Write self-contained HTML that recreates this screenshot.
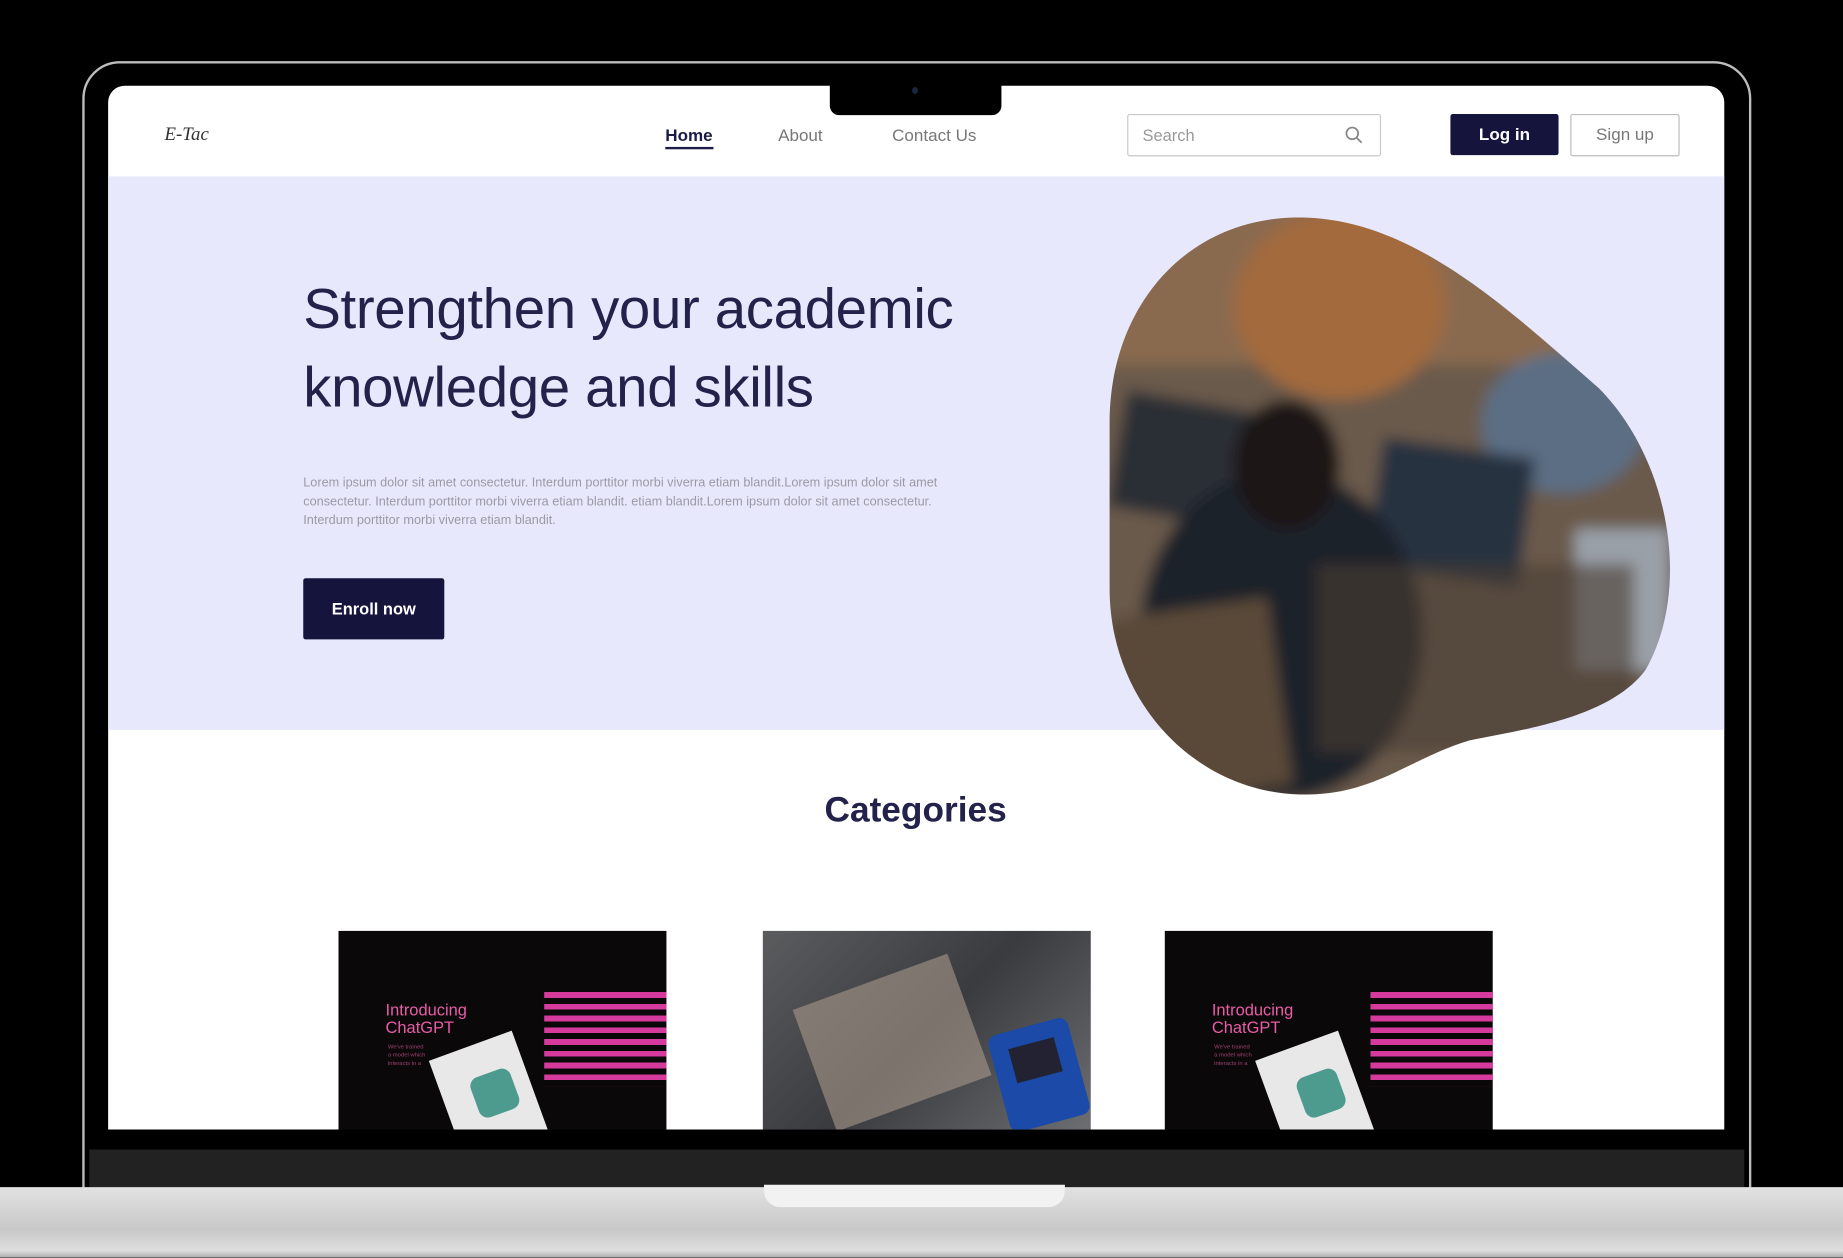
<!DOCTYPE html>
<html><head><meta charset="utf-8"><style>
html,body{margin:0;padding:0;background:#000;overflow:hidden;width:1843px;height:1258px}
#w{position:absolute;left:0;top:0;width:1568px;height:1070px;transform:scale(1.17538);transform-origin:0 0;font-family:"Liberation Sans",sans-serif}
.a{position:absolute}
.nav{font-size:14.5px;color:#777;top:108px}
</style></head><body><div id="w">
<div class="a" style="left:70px;top:52px;width:1416px;height:1000px;border:2px solid #bdbdbd;border-radius:32px 32px 0 0;background:#000"></div>
<div class="a" style="left:92px;top:73px;width:1375px;height:888px;background:#fff;border-radius:14px 14px 0 0;overflow:hidden">
 <div class="a" style="left:0;top:77px;width:1375px;height:471px;background:#e8e8fc"></div>
</div>
<div class="a" style="left:706px;top:70px;width:146px;height:28px;background:#000;border-radius:0 0 8px 8px"></div>
<div class="a" style="left:776px;top:74px;width:5px;height:6px;border-radius:50%;background:#1b2640"></div>
<div class="a" style="left:140px;top:106px;font-family:'Liberation Serif',serif;font-style:italic;font-size:16px;color:#333">E-Tac</div>
<div class="a nav" style="left:566px;color:#1c1b45;font-weight:bold">Home</div>
<div class="a" style="left:566px;top:125px;width:41px;height:2px;background:#1c1b45"></div>
<div class="a nav" style="left:662px">About</div>
<div class="a nav" style="left:759px">Contact Us</div>
<div class="a" style="left:959px;top:97px;width:214px;height:34px;border:1px solid #c9c9c9;border-radius:2px;background:#fff"></div>
<div class="a" style="left:972px;top:107px;font-size:14px;color:#999">Search</div>
<svg class="a" style="left:1144px;top:107px" width="16" height="16" viewBox="0 0 16 16"><circle cx="6.5" cy="6.5" r="5" fill="none" stroke="#888" stroke-width="1.5"/><path d="M10 10l4.5 4.5" stroke="#888" stroke-width="1.5"/></svg>
<div class="a" style="left:1234px;top:97px;width:92px;height:35px;background:#15143d;border-radius:2px;color:#fff;font-size:14.5px;font-weight:bold;text-align:center;line-height:36px">Log in</div>
<div class="a" style="left:1336px;top:97px;width:91px;height:34px;border:1px solid #bbb;border-radius:2px;color:#777;font-size:14.5px;text-align:center;line-height:35px">Sign up</div>
<div class="a" style="left:258px;top:230px;font-size:48px;line-height:67px;color:#23224b;letter-spacing:-0.3px">Strengthen your academic<br>knowledge and skills</div>
<div class="a" style="left:258px;top:403px;width:560px;font-size:10.8px;line-height:16px;color:#9a9aa6">Lorem ipsum dolor sit amet consectetur. Interdum porttitor morbi viverra etiam blandit.Lorem ipsum dolor sit amet consectetur. Interdum porttitor morbi viverra etiam blandit. etiam blandit.Lorem ipsum dolor sit amet consectetur. Interdum porttitor morbi viverra etiam blandit.</div>
<div class="a" style="left:258px;top:492px;width:120px;height:52px;background:#15143d;border-radius:2px;color:#fff;font-size:14px;font-weight:bold;text-align:center;line-height:52px">Enroll now</div>
<svg class="a" style="left:0;top:0" width="1568" height="1070">
<defs><clipPath id="b"><path d="M1105,185 C1200,185 1280,260 1360,330 C1420,390 1440,500 1400,570 C1370,610 1300,620 1250,630 C1200,645 1170,676 1110,676 C1020,676 944,600 944,500 L944,360 C944,260 1010,185 1105,185 Z"/></clipPath>
<filter id="bl"><feGaussianBlur stdDeviation="6"/></filter></defs>
<g clip-path="url(#b)"><g filter="url(#bl)">
<rect x="900" y="150" width="560" height="560" fill="#6b5a4c"/>
<rect x="900" y="150" width="560" height="160" fill="#8a6a50"/>
<ellipse cx="1140" cy="260" rx="90" ry="80" fill="#a36a3c"/>
<ellipse cx="1330" cy="360" rx="70" ry="60" fill="#5c6e84"/>
<rect x="1170" y="380" width="130" height="110" fill="#273040" transform="rotate(8 1230 430)"/>
<rect x="950" y="340" width="110" height="100" fill="#2c2f36" transform="rotate(10 1000 390)"/>
<rect x="1340" y="450" width="80" height="120" fill="#9aa0a8"/>
<ellipse cx="1090" cy="540" rx="120" ry="140" fill="#1c2129"/>
<ellipse cx="1095" cy="395" rx="45" ry="55" fill="#1a1715"/>
<rect x="950" y="520" width="140" height="160" fill="#5a4838" transform="rotate(-8 1000 600)"/>
<rect x="1120" y="480" width="270" height="160" fill="#4a3c32" opacity=".6"/>
</g></g>
</svg>
<div class="a" style="left:0;top:673px;width:1558px;text-align:center;font-size:30px;font-weight:bold;color:#23224b">Categories</div>
<div class="a" style="left:288px;top:792px;width:279px;height:169px;background:#0b0809;overflow:hidden">
 <div class="a" style="left:40px;top:60px;color:#e85ca8;font-size:14px;line-height:15px">Introducing<br>ChatGPT</div>
 <div class="a" style="left:42px;top:96px;color:#a04070;font-size:5px;line-height:7px">We've trained<br>a model which<br>interacts in a</div>
 <div class="a" style="left:175px;top:52px;width:110px;height:80px;background:repeating-linear-gradient(#d63a9c 0 5px,transparent 5px 10px)"></div>
 <div class="a" style="left:90px;top:95px;width:75px;height:90px;background:#e8e8e8;transform:rotate(-20deg)"></div>
 <div class="a" style="left:115px;top:120px;width:36px;height:36px;background:#4d9a8f;border-radius:8px;transform:rotate(-20deg)"></div>
</div>
<div class="a" style="left:649px;top:792px;width:279px;height:169px;background:linear-gradient(135deg,#5b5c5e,#3a3b3f 50%,#6d6e72);overflow:hidden">
 <div class="a" style="left:40px;top:40px;width:140px;height:110px;background:#a89a8a;opacity:.6;transform:rotate(-20deg)"></div>
 <div class="a" style="left:200px;top:80px;width:70px;height:85px;background:#1b4aa8;border-radius:8px;transform:rotate(-15deg)"></div>
 <div class="a" style="left:212px;top:95px;width:40px;height:30px;background:#223;transform:rotate(-15deg)"></div>
</div>
<div class="a" style="left:991px;top:792px;width:279px;height:169px;background:#0b0809;overflow:hidden">
 <div class="a" style="left:40px;top:60px;color:#e85ca8;font-size:14px;line-height:15px">Introducing<br>ChatGPT</div>
 <div class="a" style="left:42px;top:96px;color:#a04070;font-size:5px;line-height:7px">We've trained<br>a model which<br>interacts in a</div>
 <div class="a" style="left:175px;top:52px;width:110px;height:80px;background:repeating-linear-gradient(#d63a9c 0 5px,transparent 5px 10px)"></div>
 <div class="a" style="left:90px;top:95px;width:75px;height:90px;background:#e8e8e8;transform:rotate(-20deg)"></div>
 <div class="a" style="left:115px;top:120px;width:36px;height:36px;background:#4d9a8f;border-radius:8px;transform:rotate(-20deg)"></div>
</div>
<div class="a" style="left:76px;top:978px;width:1408px;height:32px;background:#222"></div>
<div class="a" style="left:0;top:1010px;width:1568px;height:60px;background:linear-gradient(#e2e2e2,#c8c8c8 60%,#dedede 90%,#aaa)"></div>
<div class="a" style="left:650px;top:1008px;width:256px;height:19px;background:#f2f2f2;border-radius:0 0 14px 14px"></div>
</div></body></html>
